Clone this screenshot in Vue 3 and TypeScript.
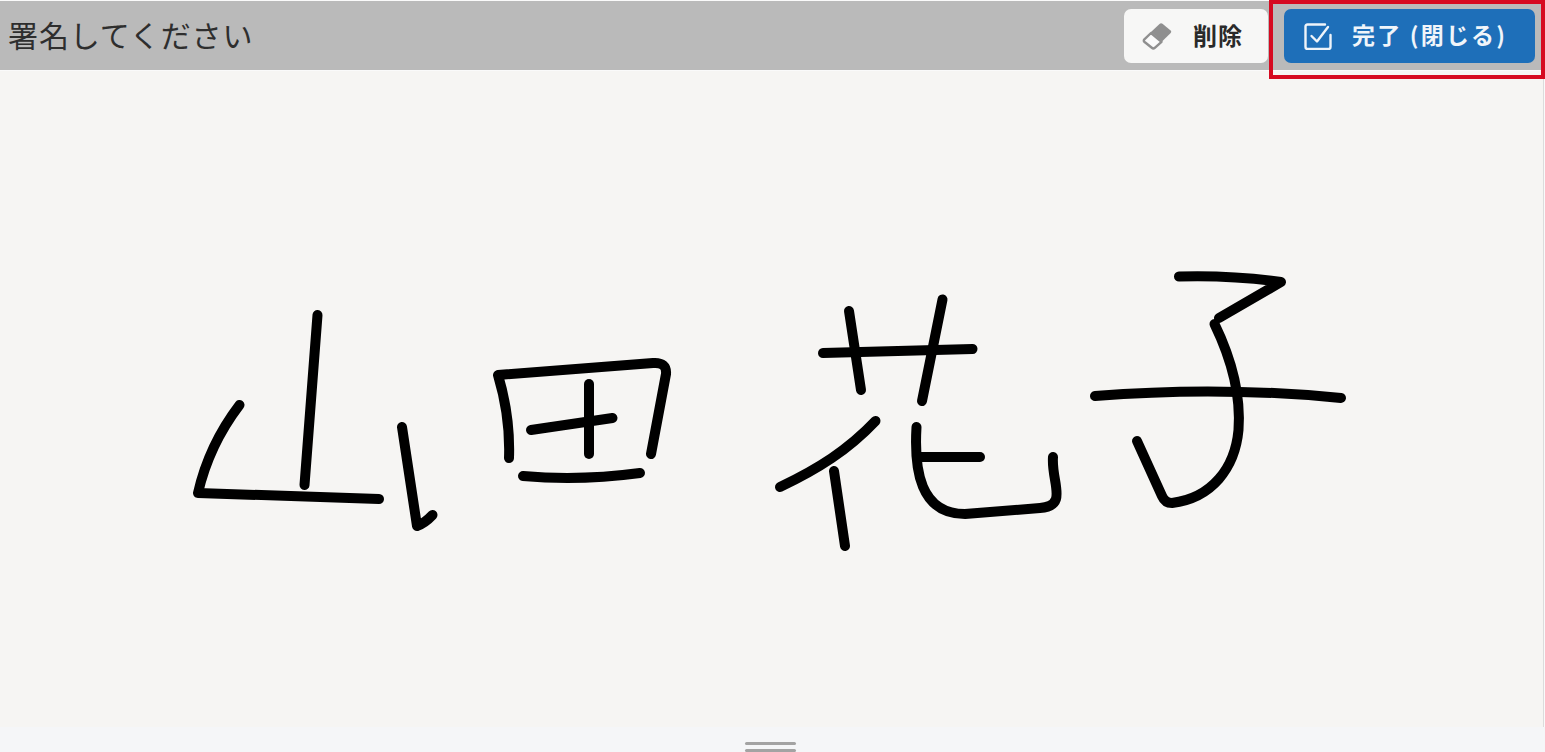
<script setup lang="ts">
const strokes: string[] = [
  // 山
  'M317.5 315 L304.5 485',
  'M239.5 405 C222 428 206 458 198 493 L379 499',
  'M402 427 L417 526 Q425 523 432.5 515',
  // 田
  'M509 458 C510 430 507 405 498 375 L653 363 Q667 362 666 374 L651 454',
  'M589 384 L589 454',
  'M531 430 L612.5 418',
  'M523 476 Q580 481 640 473',
  // 花
  'M849 311 L861 390',
  'M942.5 299.5 L922 401',
  'M823 353 L972.5 349',
  'M875.5 421 C848 450 818 469 780 487',
  'M834 471 L845 546',
  'M916.5 427 C914 470 920 514 965 514 L1040 508 C1069 506 1051 482 1053 457',
  'M921 457 L980 457',
  // 子
  'M1179 276.5 Q1232 275 1281 282 L1219 318',
  'M1214.5 324 C1232 360 1241 395 1238.5 430 C1235 468 1212 498 1172 503 Q1165 503 1162 496 L1137 441',
  'M1095 396 Q1220 386 1341 398',
]
</script>

<template>
  <div class="page">
    <header class="bar">
      <h1 class="title">署名してください</h1>
      <div class="actions">
        <button class="btn btn-clear" type="button">
          <svg class="icon" viewBox="0 0 30 30" width="30" height="30">
            <path d="M17.5 3 Q19 1.6 20.5 2.8 L28.6 9.4 Q30 10.6 28.7 12 L20 20.5 L9 11 Z" fill="#8f8f8f" />
            <path d="M9 12 L19.5 20.8 L12.8 26.8 Q11.3 28 9.8 26.8 L2.6 21 Q1.2 19.8 2.4 18.4 Z" fill="#fafafa" stroke="#8f8f8f" stroke-width="2.4" stroke-linejoin="round" />
          </svg>
          <span class="label">削除</span>
        </button>
        <button class="btn btn-done" type="button">
          <svg class="icon" viewBox="0 0 28 28" width="28" height="28" fill="none" stroke="#eef4fa" stroke-width="2.4" stroke-linecap="round" stroke-linejoin="round">
            <path d="M21 2.5 H3.5 Q1.5 2.5 1.5 4.5 V25 Q1.5 27 3.5 27 H24.5 Q26.5 27 26.5 25 V13" />
            <path d="M7.5 14 L13 19.5 L24 5" />
          </svg>
          <span class="label">完了 (閉じる)</span>
        </button>
      </div>
    </header>

    <main class="stage">
      <svg class="ink" viewBox="0 0 1545 752" width="1545" height="752" fill="none" stroke="#000" stroke-width="10" stroke-linecap="round" stroke-linejoin="round">
        <path v-for="(d, i) in strokes" :key="i" :d="d" />
      </svg>
    </main>

    <footer class="grip">
      <span class="grip-line"></span>
      <span class="grip-line"></span>
    </footer>

    <div class="highlight"></div>
  </div>
</template>

<style scoped>
.page {
  position: relative;
  width: 1545px;
  height: 752px;
  display: flex;
  flex-direction: column;
  overflow: hidden;
  background: #fafafa;
  font-family: "Noto Sans CJK JP", "Noto Sans", sans-serif;
}
.bar {
  height: 69px;
  margin-top: 1px;
  flex: none;
  display: flex;
  align-items: center;
  justify-content: space-between;
  padding: 0 10px 0 8px;
  background: #bababa;
}
.title {
  margin: 0 0 4px;
  font-size: 30px;
  font-weight: 400;
  letter-spacing: 0.9px;
  color: #2e2e2e;
  line-height: 1;
}
.actions {
  display: flex;
  gap: 16px;
  align-items: center;
}
.btn {
  height: 54px;
  border: none;
  border-radius: 7px;
  display: flex;
  align-items: center;
  font-family: inherit;
  font-size: 24px;
  font-weight: 700;
  padding: 0;
}
.label {
  padding-bottom: 3px;
}
.btn-clear {
  width: 144px;
  padding-left: 18px;
  gap: 21px;
  background: #f7f7f6;
  color: #2a2a2a;
  letter-spacing: 1px;
}
.btn-done {
  width: 251px;
  padding-left: 20px;
  gap: 20px;
  background: #1e6fb9;
  color: #f0f5fa;
  font-size: 23px;
  font-weight: 700;
  letter-spacing: 2.2px;
}
.icon {
  flex: none;
}
.stage {
  position: relative;
  flex: 1;
  margin-top: 1px;
  margin-right: 1px;
  background: #f6f5f3;
  border-right: 1px solid #dcdcdc;
}
.ink {
  position: absolute;
  left: 0;
  top: -71px;
}
.grip {
  height: 25px;
  flex: none;
  background: #f5f6f8;
  display: flex;
  flex-direction: column;
  align-items: center;
  gap: 4px;
  padding: 15px 4px 0 0;
  box-sizing: border-box;
}
.grip-line {
  width: 51px;
  height: 3px;
  flex: none;
  border-radius: 2px;
  background: #a3a3a3;
}
.highlight {
  position: absolute;
  left: 1269px;
  top: 0;
  width: 276px;
  height: 79px;
  box-sizing: border-box;
  border: 4px solid #d60a20;
  pointer-events: none;
}
</style>
